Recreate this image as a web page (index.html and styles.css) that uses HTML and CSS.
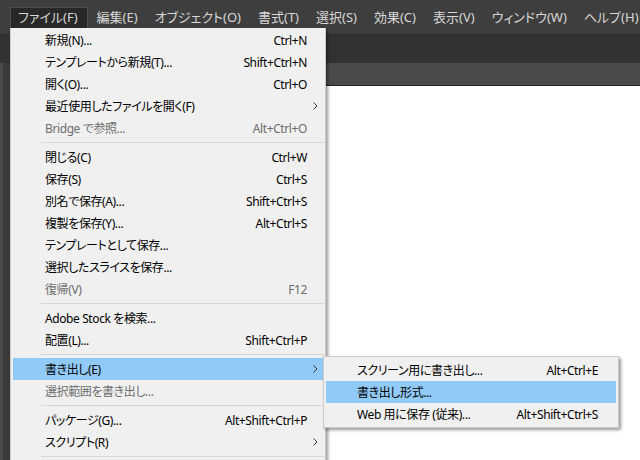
FILE: index.html
```html
<!DOCTYPE html>
<html lang="ja">
<head>
  <meta charset="UTF-8" />
  <title>ファイルメニュー</title>
  <link rel="stylesheet" href="styles.css">
</head>
<body>
  <div class="app">
    <div class="menubar">
      <span class="menubar-item active">ファイル(F)</span>
      <span class="menubar-item">編集(E)</span>
      <span class="menubar-item">オブジェクト(O)</span>
      <span class="menubar-item">書式(T)</span>
      <span class="menubar-item">選択(S)</span>
      <span class="menubar-item">効果(C)</span>
      <span class="menubar-item">表示(V)</span>
      <span class="menubar-item">ウィンドウ(W)</span>
      <span class="menubar-item">ヘルプ(H)</span>
    </div>
    <div class="controlbar"></div>
    <div class="workarea">
      <div class="toolbox"></div>
      <div class="document">
        <div class="tabbar"></div>
        <div class="canvas"></div>
      </div>
    </div>
  </div>

  <!-- File menu -->
  <div class="menu file-menu">
    <div class="menu-item"><span>新規(N)...</span><span class="key">Ctrl+N</span></div>
    <div class="menu-item"><span>テンプレートから新規(T)...</span><span class="key">Shift+Ctrl+N</span></div>
    <div class="menu-item"><span>開く(O)...</span><span class="key">Ctrl+O</span></div>
    <div class="menu-item"><span>最近使用したファイルを開く(F)</span><span class="key"></span><span class="arrow"><svg width="5" height="8" viewBox="0 0 5 8"><polyline points="0.5,0.5 4,4 0.5,7.5" fill="none" stroke="#333" stroke-width="1"/></svg></span></div>
    <div class="menu-item disabled"><span>Bridge で参照...</span><span class="key">Alt+Ctrl+O</span></div>
    <div class="separator"></div>
    <div class="menu-item"><span>閉じる(C)</span><span class="key">Ctrl+W</span></div>
    <div class="menu-item"><span>保存(S)</span><span class="key">Ctrl+S</span></div>
    <div class="menu-item"><span>別名で保存(A)...</span><span class="key">Shift+Ctrl+S</span></div>
    <div class="menu-item"><span>複製を保存(Y)...</span><span class="key">Alt+Ctrl+S</span></div>
    <div class="menu-item"><span>テンプレートとして保存...</span><span class="key"></span></div>
    <div class="menu-item"><span>選択したスライスを保存...</span><span class="key"></span></div>
    <div class="menu-item disabled"><span>復帰(V)</span><span class="key">F12</span></div>
    <div class="separator"></div>
    <div class="menu-item"><span>Adobe Stock を検索...</span><span class="key"></span></div>
    <div class="menu-item"><span>配置(L)...</span><span class="key">Shift+Ctrl+P</span></div>
    <div class="separator"></div>
    <div class="menu-item selected"><span>書き出し(E)</span><span class="key"></span><span class="arrow"><svg width="5" height="8" viewBox="0 0 5 8"><polyline points="0.5,0.5 4,4 0.5,7.5" fill="none" stroke="#333" stroke-width="1"/></svg></span></div>
    <div class="menu-item disabled"><span>選択範囲を書き出し...</span><span class="key"></span></div>
    <div class="separator"></div>
    <div class="menu-item"><span>パッケージ(G)...</span><span class="key">Alt+Shift+Ctrl+P</span></div>
    <div class="menu-item"><span>スクリプト(R)</span><span class="key"></span><span class="arrow"><svg width="5" height="8" viewBox="0 0 5 8"><polyline points="0.5,0.5 4,4 0.5,7.5" fill="none" stroke="#333" stroke-width="1"/></svg></span></div>
    <div class="separator"></div>
  </div>

  <!-- Export submenu -->
  <div class="menu sub-menu">
    <div class="menu-item"><span>スクリーン用に書き出し...</span><span class="key">Alt+Ctrl+E</span></div>
    <div class="menu-item selected"><span>書き出し形式...</span><span class="key"></span></div>
    <div class="menu-item"><span>Web 用に保存 (従来)...</span><span class="key">Alt+Shift+Ctrl+S</span></div>
  </div>
</body>
</html>
```

FILE: styles.css
```css
* {
  margin: 0;
  padding: 0;
  box-sizing: border-box;
}

body {
  width: 640px;
  height: 460px;
  overflow: hidden;
  background: #333333;
  font-family: "Noto Sans", "Noto Sans CJK JP", sans-serif;
  font-feature-settings: "palt";
}

.app {
  display: flex;
  flex-direction: column;
  height: 460px;
}

.menubar {
  height: 34px;
  background: #3e3e3e;
  display: flex;
  align-items: flex-start;
  padding: 7px 0 0 10px;
  gap: 1px;
}

.menubar-item {
  height: 21px;
  padding: 0 7px;
  font-size: 13px;
  line-height: 19px;
  color: #d8d8d8;
  white-space: nowrap;
  border: 1px solid transparent;
  border-bottom: none;
}

.menubar-item.active {
  background: #282828;
  border-color: #4e4e4e;
  padding-right: 9px;
}

.controlbar {
  height: 29px;
  background: #323232;
}

.workarea {
  flex: 1;
  display: flex;
}

.toolbox {
  width: 40px;
  background: #3a3a3a;
  border-left: 3px solid #4a4a4a;
}

.document {
  flex: 1;
  display: flex;
  flex-direction: column;
}

.tabbar {
  height: 23px;
  background: #4a4a4a;
  border-bottom: 1px solid #222;
}

.canvas {
  flex: 1;
  background: #ffffff;
}

/* dropdown menus */
.menu {
  position: absolute;
  background: #f0f0f0;
  border: 1px solid #cccccc;
  box-shadow: 2px 2px 3px rgba(0, 0, 0, 0.4);
  font-size: 12px;
  letter-spacing: -0.4px;
  color: #000;
}

.file-menu {
  left: 10px;
  top: 28px;
  width: 316px;
  padding: 1px 2px 0 2px;
  border-top: none;
}

.sub-menu {
  left: 323px;
  top: 356px;
  width: 296px;
  padding: 2px;
}

.menu-item {
  height: 22px;
  display: grid;
  grid-template-columns: 1fr auto 16px;
  align-items: center;
  padding-left: 32px;
  white-space: nowrap;
}

.sub-menu .menu-item {
  grid-template-columns: 1fr auto 18px;
  padding-left: 31px;
}

.menu-item.selected {
  background: #91c9f7;
}

.menu-item.disabled {
  color: #6d6d6d;
}

.key {
  text-align: right;
}

.arrow {
  display: flex;
  justify-content: center;
  align-items: center;
}

.separator {
  height: 7px;
  padding-top: 3px;
  margin-left: 28px;
  margin-right: -2px;
}

.separator::after {
  content: "";
  display: block;
  height: 1px;
  background: #d7d7d7;
}
```
